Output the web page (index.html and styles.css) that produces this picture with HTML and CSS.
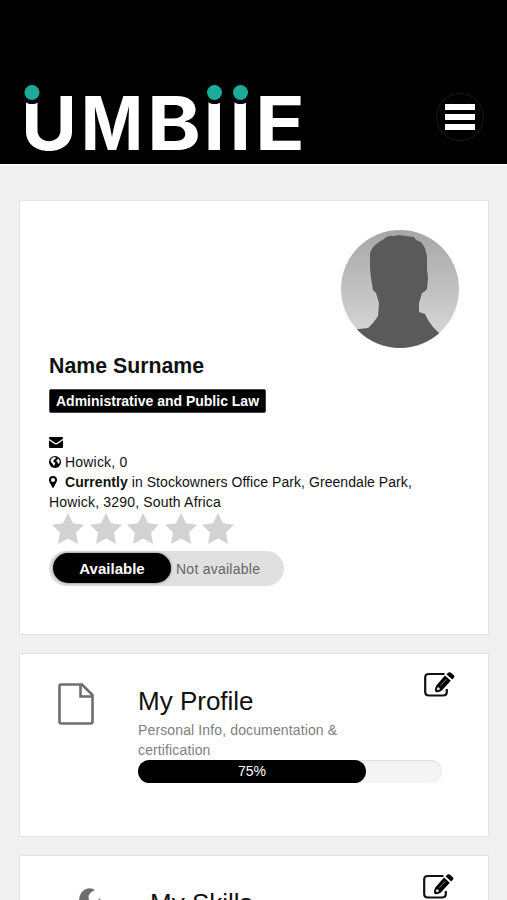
FILE: index.html
```html
<!DOCTYPE html>
<html lang="en">
<head>
  <meta charset="UTF-8">
  <meta name="viewport" content="width=device-width, initial-scale=1.0">
  <title>Umbiie</title>
  <link rel="stylesheet" href="styles.css">
</head>
<body>

  <header class="topbar">
    <svg class="logo" width="290" height="76" viewBox="0 0 290 76" role="img" aria-label="Umbiie">
      <g class="logo-text">
        <text x="1" y="69.5" textLength="56" lengthAdjust="spacingAndGlyphs">U</text>
        <text x="61" y="69.5" textLength="62" lengthAdjust="spacingAndGlyphs">M</text>
        <text x="127" y="69.5" textLength="54" lengthAdjust="spacingAndGlyphs">B</text>
        <text x="183.5" y="69.5" textLength="21.5" lengthAdjust="spacingAndGlyphs">I</text>
        <text x="209.5" y="69.5" textLength="21.5" lengthAdjust="spacingAndGlyphs">I</text>
        <text x="235" y="69.5" textLength="50" lengthAdjust="spacingAndGlyphs">E</text>
      </g>
      <g class="logo-dots">
        <circle cx="12" cy="12.5" r="9.5"/>
        <circle cx="194.5" cy="12.5" r="9.5"/>
        <circle cx="220.5" cy="12.5" r="9.5"/>
      </g>
    </svg>
    <button class="menu-btn" aria-label="Menu">
      <span></span>
      <span></span>
      <span></span>
    </button>
  </header>

  <main>
    <section class="card user">
      <svg class="avatar" width="118" height="118" viewBox="0 0 118 118">
        <defs>
          <linearGradient id="shade" x1="0" y1="0" x2="0" y2="1">
            <stop offset="0" stop-color="#a6a6a6"/>
            <stop offset="1" stop-color="#dcdcdc"/>
          </linearGradient>
          <clipPath id="round"><circle cx="59" cy="59" r="59"/></clipPath>
        </defs>
        <g clip-path="url(#round)">
          <rect width="118" height="118" fill="url(#shade)"/>
          <path fill="#5a5a5a" d="M29 23C32 15 38 12 43 9Q47 5 53 6L58 5L65 6L73 7L75 10L80 12L84 18L86 26L86 39L87 48L86 59L83 62L81 63L78 73L78 82L84 84L87 90L92 97L97 102L103 106V118H10V100L18 99L27 98L32 93L37 86L38 73L35 63L32 60L30 48L29 38Z"/>
        </g>
      </svg>
      <h2 class="name">Name Surname</h2>
      <span class="tag">Administrative and Public Law</span>
      <div class="details">
        <div><svg class="icon" width="14" height="12" viewBox="0 0 14 12"><path d="M1 1H13Q14 1 14 2V2.8L8 6.8Q7 7.4 6 6.8L0 2.8V2Q0 1 1 1ZM0 4.3L5.5 8Q7 8.9 8.5 8L14 4.3V11Q14 12 13 12H1Q0 12 0 11Z"/></svg></div>
        <div><svg class="icon" width="12" height="12" viewBox="0 0 12 12"><circle cx="6" cy="6" r="6"/><path fill="#fff" d="M4.3 1.2L6.2 1L7 2.2L5.6 3.1L5.2 4.3L3.9 4.8L4.8 6L6.4 6.8L5.8 8.5L4.9 10.2L4 8.2L2.3 6.6L1.5 4.8L2.6 2.5ZM8.2 2L10 3.6L10.8 5.8L10 7.8L8.8 7.4L8.5 6L7.3 5L7.7 3.8L9 3.4Z"/></svg><span class="place">Howick, 0</span></div>
        <div><svg class="icon pin" width="8" height="12" viewBox="0 0 8 12"><path fill-rule="evenodd" d="M4 0A4 4 0 0 1 8 4Q8 5 7.5 6L4.7 11.5Q4 12.4 3.3 11.5L.5 6Q0 5 0 4A4 4 0 0 1 4 0ZM4 2A2 2 0 1 0 4 6A2 2 0 1 0 4 2Z"/></svg><span class="street"><b>Currently</b> in Stockowners Office Park, Greendale Park,</span></div>
        <div class="town">Howick, 3290, South Africa</div>
      </div>
      <div class="stars">
        <svg viewBox="0 0 32 31"><path d="M16 0L21 10.3L32 11.8L24 19.5L26 31L16 25.5L6 31L8 19.5L0 11.8L11 10.3Z"/></svg>
        <svg viewBox="0 0 32 31"><path d="M16 0L21 10.3L32 11.8L24 19.5L26 31L16 25.5L6 31L8 19.5L0 11.8L11 10.3Z"/></svg>
        <svg viewBox="0 0 32 31"><path d="M16 0L21 10.3L32 11.8L24 19.5L26 31L16 25.5L6 31L8 19.5L0 11.8L11 10.3Z"/></svg>
        <svg viewBox="0 0 32 31"><path d="M16 0L21 10.3L32 11.8L24 19.5L26 31L16 25.5L6 31L8 19.5L0 11.8L11 10.3Z"/></svg>
        <svg viewBox="0 0 32 31"><path d="M16 0L21 10.3L32 11.8L24 19.5L26 31L16 25.5L6 31L8 19.5L0 11.8L11 10.3Z"/></svg>
      </div>
      <div class="toggle">
        <button class="on">Available</button>
        <button class="off">Not available</button>
      </div>
    </section>

    <section class="card item">
      <div class="item-icon">
        <svg class="file" width="36" height="42" viewBox="0 0 36 42"><path d="M3 1.5H24L34.5 12V38.5Q34.5 40.5 32.5 40.5H3.5Q1.5 40.5 1.5 38.5V3Q1.5 1.5 3 1.5ZM22.5 2V13.5H34"/></svg>
      </div>
      <div class="item-body">
        <h3>My Profile</h3>
        <p>Personal Info, documentation &amp;<br>certification</p>
        <div class="progress"><div class="bar" style="width: 75%">75%</div></div>
      </div>
      <svg class="edit" width="31" height="26" viewBox="0 0 31 26">
        <path class="box" d="M20.5 2H5Q1.2 2 1.2 5.5V20Q1.2 23.500 5 23.500H19Q22.800 23.500 22.800 20V17"/>
        <path d="M21 3.500L26.800 8.800L17.800 18.500Q16 20 13 20.300Q10.800 20.500 11 17.500Q11.200 15 12.500 13.200ZM22.500 2.200L24.500.6Q25.800-.2 27 .7L29.800 3.200Q31 4.400 30 5.600L28.200 7.500Z"/>
        <path class="shine" d="M16.500 13.500L22.500 7.200"/>
        <circle class="tip" cx="14.300" cy="16.800" r="1.500"/>
      </svg>
    </section>

    <section class="card item skills">
      <div class="item-icon">
        <svg class="wrench" width="44" height="13" viewBox="0 0 44 13"><path d="M16 2Q12-1 7 1Q0 4 0 13H10L9.500 8Q11 4 16 2ZM18 13L21 10L21.500 13Z"/></svg>
      </div>
      <div class="item-body">
        <h3>My Skills</h3>
      </div>
      <svg class="edit" width="31" height="26" viewBox="0 0 31 26">
        <path class="box" d="M20.5 2H5Q1.2 2 1.2 5.5V20Q1.2 23.500 5 23.500H19Q22.800 23.500 22.800 20V17"/>
        <path d="M21 3.500L26.800 8.800L17.800 18.500Q16 20 13 20.300Q10.800 20.500 11 17.500Q11.200 15 12.500 13.200ZM22.500 2.200L24.500.6Q25.800-.2 27 .7L29.800 3.200Q31 4.400 30 5.600L28.200 7.500Z"/>
        <path class="shine" d="M16.500 13.500L22.500 7.200"/>
        <circle class="tip" cx="14.300" cy="16.800" r="1.500"/>
      </svg>
    </section>
  </main>

</body>
</html>
```
FILE: styles.css
```css
* {
  box-sizing: border-box;
  margin: 0;
  padding: 0;
}

body {
  height: 900px;
  overflow: hidden;
  background: #f0f0f0;
  color: #111;
  font-family: "Liberation Sans", Arial, sans-serif;
  font-size: 14px;
  line-height: 20px;
}

svg {
  display: block;
}

button {
  border: none;
  font: inherit;
}

.topbar {
  height: 166px;
  padding: 80px 23px 0 20px;
  display: flex;
  justify-content: space-between;
  align-items: flex-start;
  background: #000;
  border-bottom: 2px solid #fafafa;
}

.logo {
  overflow: visible;
}

.logo-text {
  font-family: Inter, sans-serif;
  font-size: 74px;
  font-weight: 700;
  fill: #fff;
}

.logo-dots circle {
  fill: #1aab9b;
  stroke: #000;
  stroke-width: 4px;
}

.menu-btn {
  width: 48px;
  height: 48px;
  margin-top: 13px;
  display: flex;
  flex-direction: column;
  justify-content: center;
  align-items: center;
  gap: 4px;
  background: #000;
  border: 1px solid #191919;
  border-radius: 50%;
}

.menu-btn span {
  width: 30px;
  height: 6px;
  background: #fff;
}

main {
  padding: 34px 18px 0 19px;
}

.card {
  background: #fff;
  border: 1px solid #e3e3e3;
  margin-bottom: 18px;
}

.user {
  height: 435px;
  padding: 29px 29px 0;
}

.avatar {
  margin-left: auto;
}

.name {
  margin-top: 5px;
  font-size: 21.3px;
  line-height: 26px;
}

.tag {
  display: block;
  width: 217px;
  height: 24px;
  margin-top: 10px;
  padding-left: 6px;
  background: #000;
  border: 1px solid #444;
  border-radius: 2px;
  color: #fff;
  font-weight: bold;
  line-height: 22px;
  white-space: nowrap;
}

.details {
  margin-top: 19px;
}

.details div {
  height: 20px;
  white-space: nowrap;
}

.icon {
  display: inline-block;
  vertical-align: -1px;
}

.place {
  margin-left: 4px;
  letter-spacing: 0.2px;
}

.pin {
  margin-right: 8px;
}

.street {
  letter-spacing: 0.06px;
}

.town {
  letter-spacing: 0.18px;
}

.stars {
  display: flex;
  gap: 5.5px;
  margin: 1px 0 0 3px;
}

.stars svg {
  width: 32px;
  height: 31px;
  fill: #d2d2d2;
}

.toggle {
  display: flex;
  width: 235px;
  height: 35px;
  margin-top: 7px;
  padding: 2px 4px;
  background: #e0e0e0;
  border-radius: 18px;
}

.on {
  width: 118px;
  height: 30px;
  padding-top: 2px;
  background: #000;
  border-radius: 15px;
  box-shadow: 0 0 3px #777;
  color: #fff;
  font-size: 15px;
  font-weight: bold;
}

.off {
  padding: 1px 0 0 5px;
  background: none;
  color: #666;
  letter-spacing: 0.25px;
  white-space: nowrap;
}

.item {
  display: flex;
  height: 184px;
  padding-right: 33px;
}

/* the last card is only partly on screen */
.skills {
  height: 45px;
  margin-bottom: 0;
  padding-right: 34px;
  border-bottom: none;
  overflow: hidden;
}

.item-icon {
  width: 118px;
  padding: 29px 0 0 38px;
}

.file path {
  fill: none;
  stroke: #6e6e6e;
  stroke-width: 2.6px;
}

.item-body {
  flex: 1;
  padding-top: 31px;
}

.item h3 {
  font-size: 26px;
  font-weight: normal;
  line-height: 32px;
}

.item p {
  margin-top: 3px;
  color: #808080;
  letter-spacing: 0.13px;
  white-space: nowrap;
}

.progress {
  width: 304px;
  height: 23px;
  background: #f4f4f4;
  border-radius: 12px;
  box-shadow: inset 0 1px 2px #ddd;
}

.bar {
  height: 23px;
  background: #000;
  border-radius: 12px;
  color: #fff;
  line-height: 23px;
  text-align: center;
}

.edit {
  margin: 18px 0 0 -30px;
}

.edit .box {
  fill: none;
  stroke: #111;
  stroke-width: 2.2px;
}

.edit .shine {
  fill: none;
  stroke: #888;
  stroke-width: 1px;
}

.edit .tip {
  fill: #ddd;
}

.skills .item-icon {
  width: 130px;
  padding-left: 59px;
  padding-top: 32px;
}

.wrench {
  fill: #6e6e6e;
}
```
